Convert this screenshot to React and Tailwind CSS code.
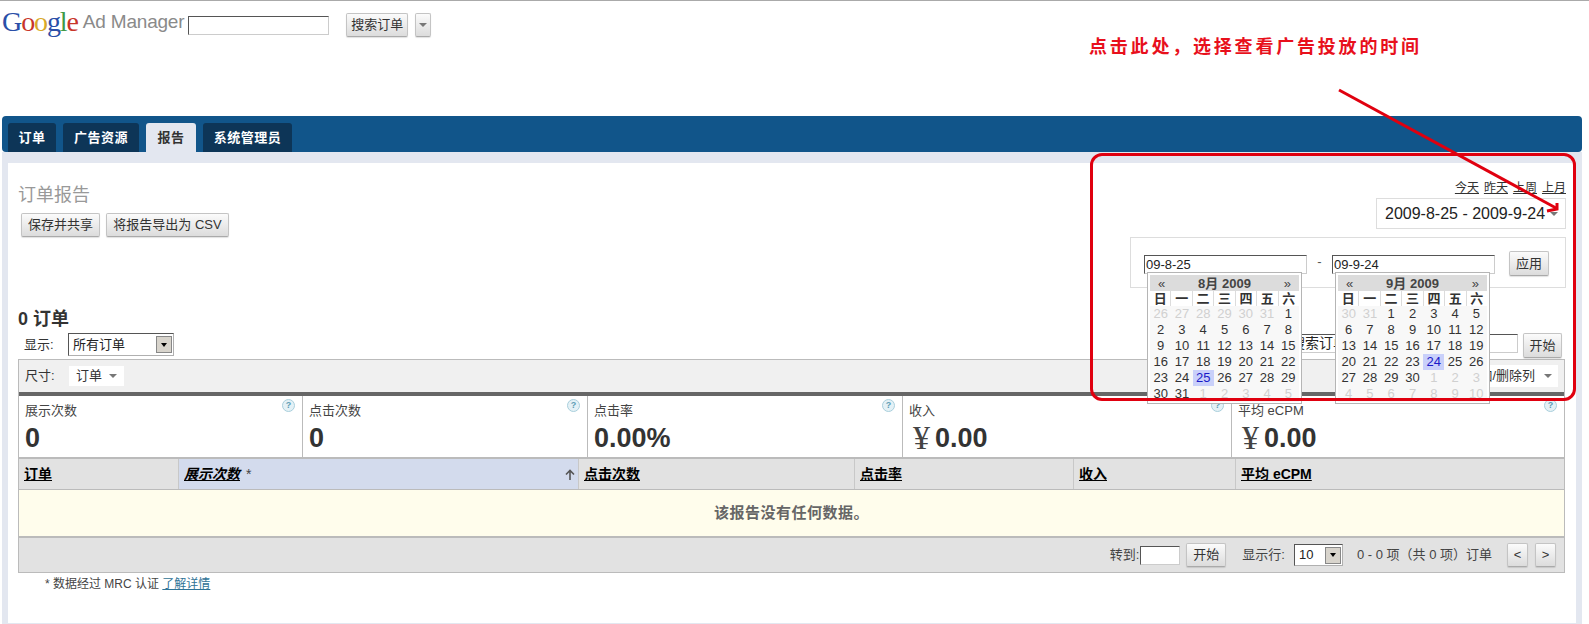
const btn = 'inline-flex items-center justify-center rounded-[2px] border border-[#c4c4c4] border-b-[#aaa] bg-gradient-to-b from-[#fbfbfb] to-[#dcdcdc] text-[13px] text-[#333] shadow-[0_1px_1px_rgba(0,0,0,0.12)]';
const field = 'h-[19px] border border-[#ccc] border-t-[#555] border-l-[#555] bg-white px-[1px] text-[13px] text-[#222] outline-none';

const metrics = [
  { label: '展示次数', value: '0', w: 'w-[284px]' },
  { label: '点击次数', value: '0', w: 'w-[285px]' },
  { label: '点击率', value: '0.00%', w: 'w-[315px]' },
  { label: '收入', value: '0.00', yen: true, w: 'w-[329px]' },
  { label: '平均 eCPM', value: '0.00', yen: true, w: 'flex-1' },
];

const columns = [
  { label: '订单', w: 'w-[160px]' },
  { label: '展示次数', w: 'w-[400px]', sorted: true },
  { label: '点击次数', w: 'w-[276px]' },
  { label: '点击率', w: 'w-[219px]' },
  { label: '收入', w: 'w-[162px]' },
  { label: '平均 eCPM', w: 'flex-1' },
];

const august = {
  title: '8月 2009',
  pick: 25,
  before: [26, 27, 28, 29, 30, 31],
  count: 31,
  after: [1, 2, 3, 4, 5],
};

const september = {
  title: '9月 2009',
  pick: 24,
  before: [30, 31],
  count: 30,
  after: [1, 2, 3, 4, 5, 6, 7, 8, 9, 10],
};

function Calendar({ month }) {
  const days = Array.from({ length: month.count }, (_, i) => i + 1);
  return (
    <div className="absolute left-[3px] top-[20px] z-10 w-[155px] border border-[#b5b5b5] bg-white px-[2px] pt-[2px] pb-[1px]">
      <div className="flex h-[16px] items-center justify-between bg-[#dcdcdc] px-[8px] text-[13px] leading-none text-[#444]">
        <span>«</span>
        <span className="font-bold">{month.title}</span>
        <span>»</span>
      </div>
      <div className="grid h-[15px] grid-cols-7 gap-x-[1px] bg-[#dcdcdc] text-center text-[13px] font-bold leading-[15px] text-[#333]">
        {['日', '一', '二', '三', '四', '五', '六'].map((d) => (
          <span key={d} className="bg-white">{d}</span>
        ))}
      </div>
      <div className="grid grid-cols-7 bg-[#f8f8f8] text-center text-[13px] leading-[16px] text-[#333]">
        {month.before.map((d) => (
          <span key={`b${d}`} className="text-[#d0d0d0]">{d}</span>
        ))}
        {days.map((d) => (
          <span key={d} className={d === month.pick ? 'bg-[#c9d0fa] text-[#1a1ac8]' : ''}>{d}</span>
        ))}
        {month.after.map((d) => (
          <span key={`a${d}`} className="text-[#d0d0d0]">{d}</span>
        ))}
      </div>
    </div>
  );
}

function Caret() {
  return <span className="h-0 w-0 border-x-[4px] border-t-[4px] border-x-transparent border-t-[#777]" />;
}

function WinSelect({ value, className }) {
  return (
    <div className={`flex items-center border border-[#b0b0b0] border-t-[#555] border-l-[#555] bg-white pl-[4px] pr-[1px] text-[13px] text-[#222] ${className}`}>
      <span className="flex-1">{value}</span>
      <span className="flex h-[17px] w-[16px] items-center justify-center border border-[#888] bg-[#d8d4cc]">
        <span className="h-0 w-0 border-x-[3px] border-t-[4px] border-x-transparent border-t-black" />
      </span>
    </div>
  );
}

function Help({ className }) {
  return (
    <span className={`absolute flex h-[13px] w-[13px] items-center justify-center rounded-full border border-[#a9cfdc] bg-[#e4f1f6] text-[9px] font-bold leading-none text-[#5f9db5] ${className}`}>
      ?
    </span>
  );
}

export default function App() {
  return (
    <div className="relative h-[624px] w-[1589px] overflow-hidden border-t border-[#aaa] bg-white [font-family:'Liberation_Sans','Noto_Sans_CJK_SC',sans-serif]">
      {/* top bar */}
      <header className="flex h-[115px] items-start pl-[2px]">
        <div className="mt-[1px] flex items-start">
          <span className="text-[28px] leading-[40px] tracking-[-1.1px] [font-family:'Liberation_Serif',serif]">
            <span className="text-[#2a4fa8]">G</span>
            <span className="text-[#c8352a]">o</span>
            <span className="text-[#d8a828]">o</span>
            <span className="text-[#2a4fa8]">g</span>
            <span className="text-[#3f9a45]">l</span>
            <span className="text-[#c8352a]">e</span>
          </span>
          <span className="ml-[5px] mt-[7px] text-[19px] leading-[26px] tracking-[-0.2px] text-[#8a8a8a]">Ad Manager</span>
        </div>
        <input className={`${field} ml-[4px] mt-[15px] w-[141px]`} />
        <button className={`${btn} ml-[17px] mt-[12px] h-[24px] w-[62px]`}>搜索订单</button>
        <button className={`${btn} ml-[7px] mt-[12px] h-[24px] w-[16px]`}><Caret /></button>
      </header>

      {/* tabs */}
      <nav className="ml-[2px] mr-[7px] flex h-[36px] items-end gap-[7px] rounded-[4px] bg-[#11558a] pl-[6px] text-[13px] font-bold tracking-[0.5px] text-white">
        <a className="flex h-[29px] w-[48px] items-center justify-center rounded-t-[3px] bg-[#0d3557]">订单</a>
        <a className="flex h-[29px] w-[76px] items-center justify-center rounded-t-[3px] bg-[#0d3557]">广告资源</a>
        <a className="flex h-[29px] w-[50px] items-center justify-center rounded-t-[3px] bg-[#e3e7f0] text-[#333]">报告</a>
        <a className="flex h-[29px] w-[89px] items-center justify-center rounded-t-[3px] bg-[#0d3557]">系统管理员</a>
      </nav>

      <div className="ml-[2px] mr-[7px] bg-[#e3e7f0] pb-[1px] pl-[6px] pr-[6px] pt-[11px]">
        <main className="h-[460px] bg-white pl-[10px] pr-[11px]">
          <section className="-mr-[1px] flex h-[146px] justify-between">
            <div className="pt-[21px]">
              <h1 className="text-[18px] font-normal leading-[22px] text-[#999]">订单报告</h1>
              <div className="ml-[3px] mt-[7px] flex gap-[6px]">
                <button className={`${btn} h-[24px] w-[79px]`}>保存并共享</button>
                <button className={`${btn} h-[24px] w-[123px]`}>将报告导出为 CSV</button>
              </div>
            </div>

            <div className="relative flex flex-col items-end pt-[18px]">
              <div className="flex gap-[5px] text-[12px] leading-[14px] text-[#333] underline">
                <a>今天</a>
                <a>昨天</a>
                <a>上周</a>
                <a>上月</a>
              </div>
              <div className="mt-[3px] flex h-[31px] w-[190px] items-center justify-between border border-[#ddd] pl-[8px] pr-[7px] text-[16px] text-[#222]">
                <span>2009-8-25 - 2009-9-24</span>
                <Caret />
              </div>

              {/* date range popup */}
              <div className="absolute right-0 top-[74px] z-10 flex h-[51px] w-[436px] items-start border border-[#ddd] bg-white pl-[13px] pt-[14px]">
                <div className="relative w-[163px]">
                  <input className={`${field} w-full`} defaultValue="09-8-25" />
                  <Calendar month={august} />
                </div>
                <span className="w-[25px] text-center text-[13px] leading-[19px] text-[#555]">-</span>
                <div className="relative w-[163px]">
                  <input className={`${field} w-full`} defaultValue="09-9-24" />
                  <Calendar month={september} />
                </div>
                <button className={`${btn} -mt-[1px] ml-[14px] h-[25px] w-[40px]`}>应用</button>
              </div>
            </div>
          </section>

          <h2 className="text-[18px] font-bold leading-[20px] text-[#333]">0 订单</h2>

          <div className="mt-[4px] flex h-[26px] items-start justify-between pr-[3px]">
            <div className="flex items-center">
              <span className="ml-[6px] w-[44px] text-[13px] leading-[23px] text-[#333]">显示:</span>
              <WinSelect value="所有订单" className="h-[23px] w-[106px]" />
            </div>
            <div className="flex items-start gap-[5px]">
              <input className={`${field} mt-[1px] w-[231px] pl-[3px] text-[14px]`} defaultValue="搜索订单" />
              <button className={`${btn} h-[25px] w-[39px]`}>开始</button>
            </div>
          </div>

          {/* report table */}
          <div className="border-x border-[#bbb]">
            <div className="flex h-[33px] items-center justify-between border-t border-[#bbb] bg-[#f0f0f0] pl-[6px] pr-[6px] text-[13px] text-[#333]">
              <div className="flex items-center">
                <span className="w-[44px]">尺寸:</span>
                <span className="flex h-[20px] w-[55px] items-center justify-center gap-[7px] bg-white">订单 <Caret /></span>
              </div>
              <span className="flex h-[22px] w-[100px] items-center justify-end gap-[9px] whitespace-nowrap bg-white pr-[6px]">添加/删除列 <Caret /></span>
            </div>
            <div className="flex h-[67px] border-b-[2px] border-t-[4px] border-b-[#bbb] border-t-[#666] bg-white">
              {metrics.map((m) => (
                <div key={m.label} className={`relative border-r border-[#bbb] pl-[6px] pt-[6px] last:border-r-0 ${m.w}`}>
                  <div className="text-[13px] leading-[17px] text-[#444]">{m.label}</div>
                  <div className="mt-[4px] flex items-center text-[27px] font-bold leading-[30px] text-[#333]">
                    {m.yen && <span className="ml-[4px] mr-[5px] text-[34px] font-normal text-[#444] [font-family:'Liberation_Serif',serif]">¥</span>}
                    {m.value}
                  </div>
                  <Help className="right-[7px] top-[3px]" />
                </div>
              ))}
            </div>
            <div className="flex h-[30px] bg-[#e2e2e2] text-[14px] font-bold text-black">
              {columns.map((c) => (
                <div
                  key={c.label}
                  className={`flex items-center justify-between border-r border-[#c8c8c8] pl-[5px] pr-[3px] last:border-r-0 ${c.w} ${c.sorted ? 'bg-[#d3dbed]' : ''}`}
                >
                  <span>
                    <a className={`underline ${c.sorted ? 'italic' : ''}`}>{c.label}</a>
                    {c.sorted && <span className="ml-[6px] font-normal text-[#444]">*</span>}
                  </span>
                  {c.sorted && (
                    <svg width="10" height="11" viewBox="0 0 10 11" fill="none" stroke="#555" strokeWidth="1.6">
                      <path d="M5 11 V1.5 M1 5.5 L5 1.5 L9 5.5" />
                    </svg>
                  )}
                </div>
              ))}
            </div>
            <div className="flex h-[49px] items-center justify-center border-b-[2px] border-t border-b-[#bbb] border-t-[#bbb] bg-[#fffdec] text-[15px] font-bold tracking-[0.5px] text-[#666]">
              该报告没有任何数据。
            </div>
            <div className="flex h-[35px] items-center justify-end border-b border-b-[#bbb] bg-[#e2e2e2] pr-[8px] text-[13px] text-[#444]">
              <span>转到:</span>
              <input className={`${field} ml-[1px] w-[40px]`} />
              <button className={`${btn} ml-[6px] h-[24px] w-[40px]`}>开始</button>
              <span className="ml-[16px]">显示行:</span>
              <WinSelect value="10" className="ml-[9px] h-[22px] w-[49px]" />
              <span className="ml-[14px]">0 - 0 项（共 0 项）订单</span>
              <button className={`${btn} ml-[15px] h-[24px] w-[21px]`}>&lt;</button>
              <button className={`${btn} ml-[7px] h-[24px] w-[21px]`}>&gt;</button>
            </div>
          </div>

          <p className="ml-[27px] mt-[2px] text-[12px] leading-[18px] text-[#444]">
            * 数据经过 MRC 认证 <a className="text-[#2f7396] underline">了解详情</a>
          </p>
        </main>
      </div>

      {/* red annotations drawn over the screenshot */}
      <div className="pointer-events-none absolute left-[1089px] top-[33px] z-20 whitespace-nowrap text-[18px] font-bold leading-[22px] tracking-[2.8px] text-[#e8101c] [font-family:'Noto_Sans_CJK_SC',sans-serif]">
        点击此处，选择查看广告投放的时间
      </div>
      <div className="pointer-events-none absolute left-[1090px] top-[152px] z-20 h-[248px] w-[486px] rounded-[12px] border-[3px] border-[#e0000f]" />
      <svg className="pointer-events-none absolute left-0 top-0 z-20" width="1589" height="624" viewBox="0 0 1589 624" fill="none" stroke="#e0000f" strokeWidth="3">
        <path d="M1339 89 L1556 207" />
        <path d="M1557 202 L1557 208 L1547 210" />
      </svg>
    </div>
  );
}
